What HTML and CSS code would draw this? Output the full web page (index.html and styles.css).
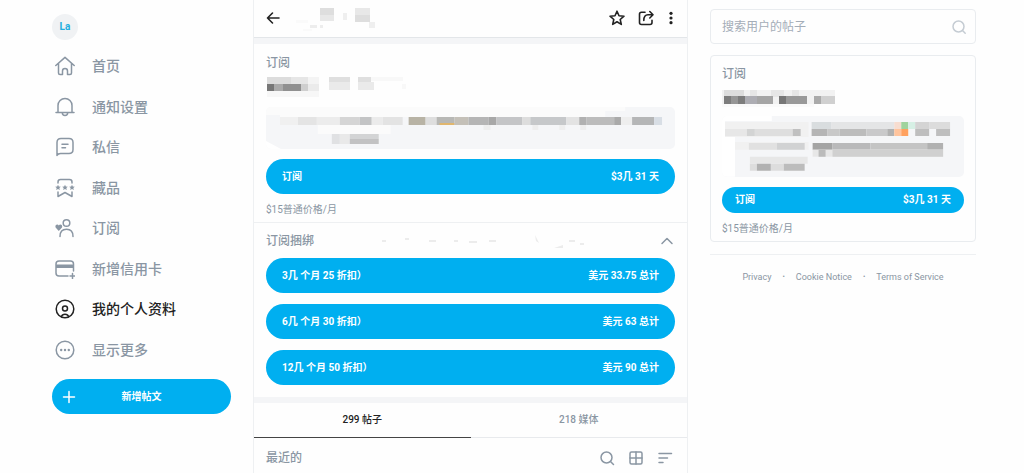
FILE: index.html
```html
<!DOCTYPE html>
<html lang="zh-CN">
<head>
<meta charset="utf-8">
<meta name="viewport" content="width=device-width, initial-scale=1">
<title>我的个人资料</title>
<link rel="stylesheet" href="styles.css">
</head>
<body>
<div class="layout">
  <aside class="sidebar">
    <div class="avatar">La</div>
    <nav class="menu">
      <a class="menu-item" href="#"><svg class="icon menu-icon" viewBox="0 0 20 20"><path d="M.8 9.500 10 1.400l9.200 8.100M3.500 7.500V17q0 1.500 1.500 1.500h2.500V15q0-2.500 2.500-2.500t2.500 2.500v3.500H15q1.500 0 1.500-1.500V7.500"/></svg>首页</a>
      <a class="menu-item" href="#"><svg class="icon menu-icon" viewBox="0 0 20 20"><path d="M1 15.500h18M3 15.500V8.500a7 7 0 0 1 14 0v7M7.300 15.800a2.700 2.700 0 0 0 5.400 0"/></svg>通知设置</a>
      <a class="menu-item" href="#"><svg class="icon menu-icon" viewBox="0 0 20 20"><path d="M2 18.500V5.500Q2 1.500 6 1.500h8q4 0 4 4v7q0 4-4 4H5.500Q3 16.500 2 18.500M7 7.300h6M7 10.700h3.500"/></svg>私信</a>
      <a class="menu-item" href="#"><svg class="icon menu-icon" viewBox="0 0 20 20"><path d="M3 5V4q0-2.500 2.500-2.500h9Q17 1.500 17 4v1M3 14v4.500l7-4 7 4V14"/><path class="solid" d="m3 6.700.8 1.900 2 .2-1.500 1.300.5 2L3 11l-1.800 1.100.5-2L.2 8.800l2-.2zM10 6.700l.8 1.900 2 .2-1.500 1.300.5 2L10 11l-1.800 1.100.5-2-1.500-1.300 2-.2zM17 6.700l.8 1.900 2 .2-1.500 1.300.5 2L17 11l-1.800 1.100.5-2-1.500-1.300 2-.2z"/></svg>藏品</a>
      <a class="menu-item" href="#"><svg class="icon menu-icon" viewBox="0 0 20 20"><circle cx="11.500" cy="5" r="3.300"/><path d="M5 18.500q0-7.200 6.500-7.200t6.500 7.200"/><path class="solid" d="M3.800 13 .6 9.500Q-.2 6.800 2.200 6.500q1 0 1.600 1 .6-1 1.600-1 2.400.3 1.600 3z"/></svg>订阅</a>
      <a class="menu-item" href="#"><svg class="icon menu-icon" viewBox="0 0 20 20"><path d="M13 17H4q-3 0-3-3V5q0-3 3-3h11.500q3 0 3 3v7M17.500 14.500v5M15 17h5"/><path class="solid" d="M1 5.500h17.500V9H1z"/></svg>新增信用卡</a>
      <a class="menu-item active" href="#" aria-current="page"><svg class="icon menu-icon" viewBox="0 0 20 20"><circle cx="10" cy="10" r="8.800"/><circle cx="10" cy="9.500" r="2.500"/><path d="M6.500 17.500q.7-2.200 3.500-2.200t3.500 2.200"/></svg>我的个人资料</a>
      <a class="menu-item" href="#"><svg class="icon menu-icon" viewBox="0 0 20 20"><circle cx="10" cy="10" r="8.800"/><g class="solid"><circle cx="6.200" cy="10" r="1.200"/><circle cx="10" cy="10" r="1.200"/><circle cx="13.800" cy="10" r="1.200"/></g></svg>显示更多</a>
    </nav>
    <button class="pill new-post" type="button"><svg class="icon plus" viewBox="0 0 14 14"><path d="M7 1.500v11M1.500 7h11"/></svg><span>新增帖文</span></button>
  </aside>

  <main class="profile">
    <header class="topbar">
      <button class="icon-button" type="button" aria-label="返回"><svg class="icon small" viewBox="0 0 16 16"><path d="M14 8H2.500M7.500 3l-5 5 5 5"/></svg></button>
      <svg class="mosaic topbar-name" viewBox="0 0 86 28" aria-hidden="true">
        <g fill="#dedede"><path d="M29 4h14v7H29z"/><path d="M64 4h15v7H64z" fill="#e8e8e8"/><path d="M29 11h14v6H29z" fill="#e8e8e8"/><path d="M64 11h15v7H64z"/><path d="M52 9h4v7h-4zM78 18h6v6h-6z" fill="#efefef"/><path d="M19 21h7v3h-7zM29 21h3v3h-3z" fill="#ededed"/><path d="M5 16h12v3H5zM12 25h9v2h-9z" fill="#fafafa"/></g>
      </svg>
      <div class="topbar-actions">
        <button class="icon-button" type="button" aria-label="收藏"><svg class="icon medium" viewBox="0 0 18 18"><path d="m9 2.200 2 4.600 5 .4-3.800 3.300 1.100 4.900L9 12.800l-4.300 2.600 1.100-4.900L2 7.200l5-.4z"/></svg></button>
        <button class="icon-button" type="button" aria-label="分享"><svg class="icon medium" viewBox="0 0 18 18"><path d="M8 3.200H4.500q-2 0-2 2v8.300q0 2 2 2h8.500q2 0 2-2v-2.300M6.800 11.500Q6.800 5.800 11 5.800h4.800M12.800 2.500 16 5.800 12.800 9"/></svg></button>
        <button class="icon-button" type="button" aria-label="更多"><svg class="icon dots" viewBox="0 0 10 18"><g class="solid"><circle cx="5" cy="4.300" r="1.600"/><circle cx="5" cy="9" r="1.600"/><circle cx="5" cy="13.700" r="1.600"/></g></svg></button>
      </div>
    </header>

    <section class="block subscribe">
      <h2 class="heading">订阅</h2>
      <svg class="mosaic user-name" viewBox="0 0 160 24" aria-hidden="true">
        <path fill="#dcdcdc" d="M1 2h24v7H1z"/><path fill="#e6e6e6" d="M25 2h17v7H25z"/><path fill="#f4f4f4" d="M42 2h11v7H42z"/>
        <path fill="#777" d="M1 9h7v7H1z"/><path fill="#aaa" d="M8 9h9v7H8z"/><path fill="#909090" d="M17 9h18v7H17z"/><path fill="#cfcfcf" d="M35 9h7v7h-7z"/><path fill="#ebebeb" d="M42 9h11v7H42z"/><path fill="#f7f7f7" d="M1 16h52v6H1z"/>
        <path fill="#dfdfdf" d="M63 2h21v5H63zM92 2h13v5H92z"/><path fill="#eaeaea" d="M63 7h21v8H63zM92 7h16v8H92z"/><path fill="#f8f8f8" d="M105 2h32v4h-32zM136 9h4v5h-4z"/>
      </svg>
      <div class="message">
        <svg class="mosaic" viewBox="0 0 410 42" preserveAspectRatio="xMinYMin" aria-hidden="true">
          <path fill="#fbfbfb" d="M0 0h360v4H340v6H125v17H52V18H14V8H0z"/><path fill="#fff" d="M0 34v8h15z"/>
          <path fill="#f0f0f0" d="M14 10h18v8H14z"/><path fill="#e4e4e4" d="M32 10h19v8H32z"/><path fill="#ececec" d="M51 10h23v8H51z"/><path fill="#d5d5d5" d="M74 10h20v8H74z"/><path fill="#c3c4c5" d="M94 10h12v8H94z"/><path fill="#ebebeb" d="M106 10h11v8h-11z"/><path fill="#e3e3e3" d="M117 10h20v8h-20z"/>
          <path fill="#b8b3a5" d="M143 10h17v8h-17z"/><path fill="#dedede" d="M160 10h11v8h-11z"/><path fill="#b8b8b5" d="M171 10h18v8h-18z"/><path fill="#e0b66e" d="M174 16h15v2h-15z"/><path fill="#c4c0b8" d="M189 10h14v8h-14z"/><path fill="#b5b5b5" d="M203 10h20v8h-20z"/><path fill="#a8a8a8" d="M223 10h8v8h-8z"/><path fill="#c4c5c7" d="M231 10h26v8h-26z"/><path fill="#ddd" d="M257 10h8v8h-8z"/><path fill="#c6c8ca" d="M265 10h36v8h-36z"/><path fill="#e3e3e3" d="M301 10h13v8h-13z"/><path fill="#b1b1b1" d="M314 10h7v8h-7z"/><path fill="#bcbcbc" d="M321 10h28v8h-28z"/><path fill="#aaa" d="M349 10h7v8h-7z"/><path fill="#eee" d="M356 10h11v8h-11z"/><path fill="#b5b6b7" d="M367 10h22v8h-22z"/><path fill="#d8dee5" d="M389 10h8v8h-8z"/>
          <path fill="#eeeeee" d="M218 18h7v5h-7zM267 18h6v5h-6zM294 18h6v5h-6zM315 18h6v5h-6z"/>
          <path fill="#e0e1e3" d="M66 27h8v10h-8z"/><path fill="#e9e9e9" d="M74 27h10v10H74z"/><path fill="#d3d4d5" d="M84 27h29v5H84z"/><path fill="#c2c2c3" d="M84 32h29v5H84z"/>
        </svg>
      </div>
      <button class="pill offer" type="button"><span>订阅</span><span>$3几 31 天</span></button>
      <p class="price">$15普通价格/月</p>
    </section>

    <section class="block bundles">
      <div class="bundle-head">
        <h2 class="heading">订阅捆绑</h2>
        <svg class="mosaic bundle-smudge" viewBox="0 0 210 18" aria-hidden="true"><path fill="#ececec" d="M0 8h4v2H0zM23 6h4v2h-4zM47 8h7v2h-7zM72 8h4v2h-4zM87 9h8v2h-8zM107 8h7v2h-7zM153 3l4 8-3-2zM172 16l9-3v3zM187 8h6v2h-6zM198 11h4v2h-4z"/></svg>
        <button class="icon-button" type="button" aria-label="收起"><svg class="icon small muted" viewBox="0 0 16 16"><path d="m3 10.500 5-5 5 5"/></svg></button>
      </div>
      <div class="bundle-list">
        <button class="pill offer" type="button"><span>3几 个月 25 折扣）</span><span>美元 33.75 总计</span></button>
        <button class="pill offer" type="button"><span>6几 个月 30 折扣）</span><span>美元 63 总计</span></button>
        <button class="pill offer" type="button"><span>12几 个月 50 折扣）</span><span>美元 90 总计</span></button>
      </div>
    </section>

    <div class="tabs" role="tablist">
      <button class="tab selected" type="button" role="tab" aria-selected="true">299 帖子</button>
      <button class="tab" type="button" role="tab" aria-selected="false">218 媒体</button>
    </div>
    <div class="filter">
      <h2 class="heading">最近的</h2>
      <div class="filter-actions">
        <button class="icon-button" type="button" aria-label="搜索"><svg class="icon small muted" viewBox="0 0 16 16"><circle cx="7.500" cy="7.500" r="5.500"/><path d="m11.500 11.500 3 3"/></svg></button>
        <button class="icon-button" type="button" aria-label="网格"><svg class="icon small muted" viewBox="0 0 16 16"><rect x="2" y="2" width="12" height="12" rx="1.500"/><path d="M8 2v12M2 8h12"/></svg></button>
        <button class="icon-button" type="button" aria-label="排序"><svg class="icon small muted" viewBox="0 0 16 16"><path d="M2 3.500h12.500M2 8h8.500M2 12.500h4"/></svg></button>
      </div>
    </div>
  </main>

  <aside class="rail">
    <form class="search">
      <input class="search-input" type="text" placeholder="搜索用户的帖子" aria-label="搜索用户的帖子">
      <button class="icon-button" type="button" aria-label="搜索"><svg class="icon small pale" viewBox="0 0 16 16"><circle cx="7.500" cy="7.500" r="5.500"/><path d="m11.500 11.500 2.700 2.700"/></svg></button>
    </form>
    <section class="card">
      <h2 class="heading">订阅</h2>
      <svg class="mosaic card-name" viewBox="0 0 120 20" aria-hidden="true">
        <path fill="#f2f2f2" d="M0 2h113v14H0z"/><path fill="#fafafa" d="M0 16h92v3H0z"/><path fill="#ddd" d="M2 2h20v7H2z"/><path fill="#e6e6e6" d="M28 2h7v7h-7zM49 2h13v7H49zM70 2h7v7h-7z"/><path fill="#7d7d7d" d="M2 8h7v8H2zM16 8h7v8h-7z"/><path fill="#969696" d="M9 8h7v8H9z"/><path fill="#adadb3" d="M23 8h12v8H23z"/><path fill="#a5a5a5" d="M35 8h16v8H35z"/><path fill="#777" d="M57 8h7v8h-7z"/><path fill="#999" d="M64 8h21v8H64z"/><path fill="#aaa" d="M92 8h7v8h-7z"/><path fill="#d0d0d0" d="M99 8h14v8H99z"/>
      </svg>
      <div class="message card-message">
        <svg class="mosaic" viewBox="0 0 243 61" preserveAspectRatio="xMinYMin" aria-hidden="true">
          <path fill="#fff" d="M0 0h50v5H0zM0 0h3v61H0zM0 21h13v40H0z"/><path fill="#f1f1f1" d="M3 6h84v15H3zM13 26h74v8H13z"/>
          <path fill="#e7e7e7" d="M3 13h22v7H3z"/><path fill="#d3d4d4" d="M25 13h8v7h-8z"/><path fill="#dedede" d="M33 13h38v7H33z"/><path fill="#c0c0c0" d="M71 13h8v7h-8z"/>
          <path fill="#d9dddf" d="M90 6h20v7H90z"/><path fill="#e4e5e6" d="M110 6h63v7h-63z"/><path fill="#b5b5b5" d="M90 13h16v7H90z"/><path fill="#c8c8c8" d="M106 13h12v7h-12z"/><path fill="#bcbcbc" d="M118 13h27v7h-27z"/><path fill="#c9c9ca" d="M145 13h21v7h-21z"/><path fill="#b1b1b1" d="M166 13h7v7h-7z"/><path fill="#f7ddd0" d="M173 6h7v7h-7z"/><path fill="#ffc49d" d="M173 13h7v7h-7z"/><path fill="#9fd39d" d="M180 6h7v7h-7z"/><path fill="#ffa15f" d="M180 13h7v7h-7z"/><path fill="#d6f0e5" d="M187 6h7v7h-7z"/><path fill="#d4d4d4" d="M194 6h14v7h-14z"/><path fill="#bebebe" d="M194 13h14v7h-14zM215 13h14v7h-14z"/><path fill="#dcdcdc" d="M208 6h21v7h-21z"/>
          <path fill="#e1e1e1" d="M27 27h28v7H27z"/><path fill="#d1d2d3" d="M55 27h28v7H55z"/><path fill="#a4a4a4" d="M91 27h20v7H91z"/><path fill="#b9b9ba" d="M111 27h38v7h-38z"/><path fill="#c4c4c4" d="M149 27h57v7h-57z"/><path fill="#b1b1b1" d="M206 27h16v7h-16z"/><path fill="#e7e7e7" d="M91 34h131v7H91zM28 41h58v7H28z"/><path fill="#bbb" d="M97 34h7v7h-7z"/><path fill="#d0d0d0" d="M111 34h111v7H111z"/>
          <path fill="#ddd" d="M28 48h7v7h-7zM49 48h13v7H49z"/><path fill="#b1b1b1" d="M35 48h14v7H35z"/><path fill="#bcbcbc" d="M62 48h21v7H62z"/>
        </svg>
      </div>
      <button class="pill offer compact" type="button"><span>订阅</span><span>$3几 31 天</span></button>
      <p class="price">$15普通价格/月</p>
    </section>
    <footer class="legal"><a href="#">Privacy</a><span>•</span><a href="#">Cookie Notice</a><span>•</span><a href="#">Terms of Service</a></footer>
  </aside>
</div>
</body>
</html>
```

FILE: styles.css
```css
* { box-sizing: border-box; }

body {
  margin: 0;
  background: #fefefe;
  color: #8a96a3;
  font: 10px/16px Roboto, "Noto Sans CJK SC", sans-serif;
}

h2, p { margin: 0; }
a { color: inherit; text-decoration: none; }
button { font: inherit; color: inherit; }

.layout {
  display: grid;
  grid-template-columns: 179px minmax(0, 1fr) 266px;
  gap: 22px;
  min-height: 100vh;
  padding: 0 48px 0 52px;
}

.icon {
  display: block;
  flex: none;
  fill: none;
  stroke: currentColor;
  stroke-width: 1.5;
  stroke-linecap: round;
  stroke-linejoin: round;
}
.icon .solid { fill: currentColor; stroke: none; }
.small { width: 16px; height: 16px; }
.medium { width: 18px; height: 18px; }
.dots { width: 10px; height: 18px; }
.muted { color: #8a96a3; }
.pale { color: #c5ccd3; }

.icon-button {
  display: block;
  flex: none;
  padding: 0;
  border: 0;
  background: none;
}

.mosaic { display: block; }

.sidebar { padding-top: 14px; }
.avatar {
  display: grid;
  place-items: center;
  width: 26px;
  height: 26px;
  border-radius: 50%;
  background: #f0f2f4;
  color: #22aede;
  font-weight: 700;
}
.menu {
  display: grid;
  grid-auto-rows: 1fr;
  height: 324px;
  margin-top: 6px;
}
.menu-item {
  display: flex;
  align-items: center;
  gap: 17px;
  padding-left: 3px;
  font-size: 14px;
  font-weight: 500;
  line-height: 20px;
}
.menu-item.active { color: #222; }
.menu-icon { width: 20px; height: 20px; }

.pill {
  display: flex;
  align-items: center;
  width: 100%;
  height: 35px;
  padding: 0 16px;
  border: 0;
  border-radius: 18px;
  background: #00aff0;
  color: #fff;
  font-weight: 700;
}
.offer { justify-content: space-between; }
.compact { height: 26px; padding: 0 13px; }
.new-post {
  display: grid;
  grid-template-columns: 14px 1fr 14px;
  margin-top: 9px;
  padding: 0 10px;
}
.plus { width: 14px; height: 14px; }

.profile {
  border: solid #eef0f2;
  border-width: 0 1px;
}
.topbar {
  display: flex;
  align-items: center;
  height: 38px;
  padding: 0 11px 2px;
  border-bottom: 1px solid #e3e6e9;
  color: #222;
}
.topbar .icon { stroke-width: 1.6; }
.topbar-name { width: 86px; height: 28px; margin-left: 10px; }
.topbar-actions { display: flex; gap: 11px; margin-left: auto; }

.heading { font-size: 12px; font-weight: 500; line-height: 18px; }
.block { padding: 0 12px; }
.subscribe {
  padding-top: 10px;
  padding-bottom: 4px;
  border-top: 6px solid #f4f5f7;
  border-bottom: 1px solid #eef0f2;
}
.user-name { width: 160px; height: 24px; margin-top: 3px; }
.message {
  height: 42px;
  margin: 8px 0 10px;
  overflow: hidden;
  border-radius: 5px;
  background: #f5f6f8;
}
.message .mosaic { width: 100%; height: 100%; }
.price { margin-top: 8px; }

.bundles {
  padding-top: 9px;
  padding-bottom: 12px;
  border-bottom: 6px solid #f4f5f7;
}
.bundle-head {
  display: flex;
  align-items: center;
  justify-content: space-between;
}
.bundle-smudge { width: 210px; height: 18px; }
.bundle-list { display: grid; gap: 11px; margin-top: 8px; }

.tabs {
  display: grid;
  grid-template-columns: 1fr 1fr;
  height: 35px;
}
.tab {
  padding: 0;
  border: 0;
  border-bottom: 1px solid #e8eaed;
  background: none;
  font-weight: 500;
}
.tab.selected { border-bottom-color: #444; color: #222; }
.filter {
  display: flex;
  align-items: center;
  justify-content: space-between;
  height: 40px;
  padding: 0 14px 0 12px;
}
.filter-actions { display: flex; gap: 13px; }

.rail { padding-top: 9px; }
.search {
  display: flex;
  align-items: center;
  height: 35px;
  padding: 0 8px 0 11px;
  border: 1px solid #e9ecef;
  border-radius: 4px;
}
.search-input {
  flex: 1;
  min-width: 0;
  padding: 0;
  border: 0;
  outline: 0;
  background: none;
  color: #8a96a3;
  font: inherit;
  font-size: 12px;
}
.search-input::placeholder { color: #a4adb8; opacity: 1; }
.card {
  margin-top: 11px;
  padding: 9px 11px 4px;
  border: 1px solid #e9ecef;
  border-radius: 4px;
}
.card-name { width: 120px; height: 20px; margin-top: 5px; }
.card-message { height: 61px; margin-top: 8px; }
.legal {
  display: flex;
  justify-content: center;
  gap: 11px;
  margin-top: 12px;
  padding-top: 14px;
  border-top: 1px solid #eef0f2;
  font-size: 9px;
}
.legal span { font-size: 7px; }
```
